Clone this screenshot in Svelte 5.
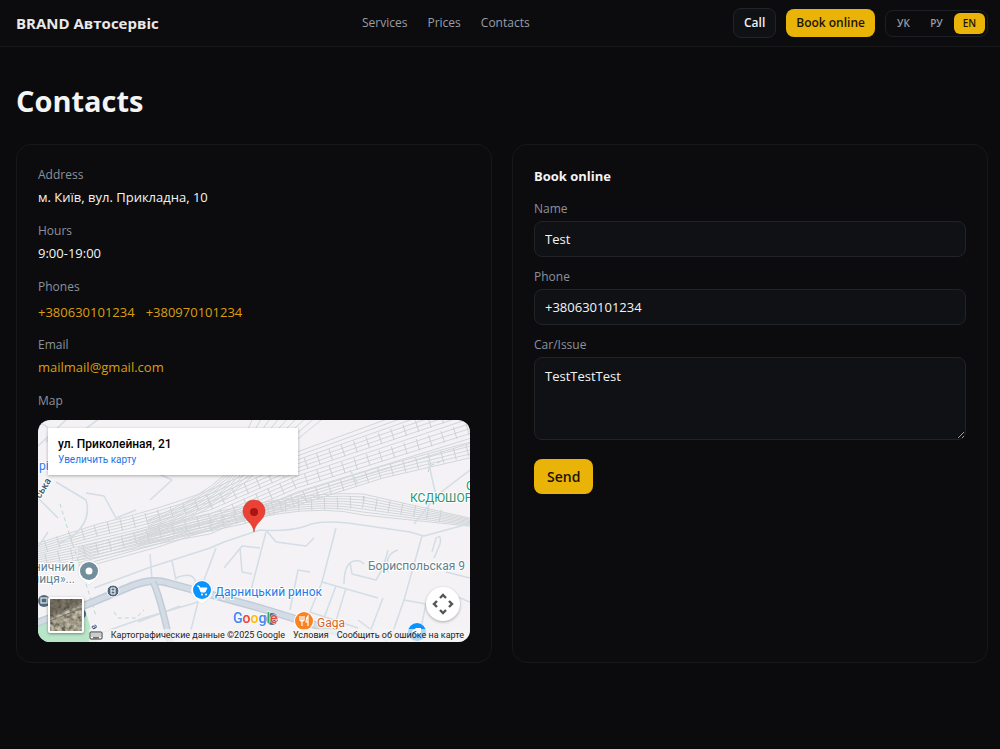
<script>
	const navLinks = ['Services', 'Prices', 'Contacts'];
	const languages = ['УК', 'РУ', 'EN'];
	const phones = ['+380630101234', '+380970101234'];

	let language = $state('EN');
	let name = $state('Test');
	let phone = $state('+380630101234');
	let issue = $state('TestTestTest');

	// rail yard: every track starts in the left bundle and fans out to the right
	const tracks = [];
	for (let i = 0; i < 12; i++) {
		tracks.push(`M-5 ${125 + i * 2} L60 ${104 + i * 3} Q120 ${90 + i * 3} 172 ${70 + i * 4} L259 ${32 + i * 4} L440 ${-34 + i * 5}`);
	}
	for (let i = 0; i < 5; i++) {
		tracks.push(`M100 ${118 + i * 2} L205 ${92 + i * 3} L269 ${70 + i * 3} L345 ${46 + i * 3} L440 ${20 + i * 4}`);
	}
	for (let i = 0; i < 8; i++) {
		tracks.push(`M40 ${128 + i * 3} L120 ${106 + i * 3} Q190 ${88 + i * 2} 239 ${80 + i * 2} T325 ${74 + i * 3} L440 ${100 + i}`);
	}
	for (let i = 0; i < 9; i++) {
		tracks.push(`M110 ${100 + i * 2} Q160 ${80 + i * 2} 190 ${52 + i * 3} L${216 + i * 9} -4`);
	}

	// sleepers are drawn as wide strokes with sparse dashes
	const sleepers = [
		'M-5 130 L60 110 Q120 98 172 80',
		'M-5 142 L60 128 Q120 112 172 100',
		'M172 84 L259 46 L440 -14',
		'M172 100 L259 62 L440 6',
		'M205 98 L269 76 L345 52 L440 28',
		'M172 106 L239 86 L325 82 L405 96'
	];

	const streets = [
		'M0 26 L28 0', 'M14 34 L62 -2', 'M0 78 L20 98', 'M18 62 L48 80 Q54 100 35 116 L20 124', 'M48 73 L66 76 L78 98 L98 90',
		'M112 50 L134 60 L112 80', 'M0 2 Q20 10 8 22', 'M-2 130 L10 112',
		'M172 128 L186 122 L222 110 Q250 112 268 106 Q280 100 310 103 L372 112 L386 116 L430 104',
		'M228 110 L238 122 L268 126 L276 118', 'M228 112 L212 174', 'M178 128 L160 176', 'M186 148 L204 126 L222 128 M202 128 L204 152 L214 154',
		'M298 108 L284 162 L340 178', 'M272 152 L260 150 L252 190', 'M284 162 L272 192 L320 208', 'M298 166 L286 198', 'M308 168 L297 204',
		'M345 178 L332 212', 'M306 164 Q306 138 322 141 L326 144 M312 142 L314 154 L338 160 Q346 148 350 130', 'M360 130 Q346 134 350 152',
		'M384 116 L366 180 L388 184 L380 222', 'M366 180 L352 220', 'M394 132 L398 118 Q404 114 402 124 L396 138', 'M408 152 L432 158',
		'M312 50 L320 64', 'M390 40 L398 76 L376 104', 'M398 76 L432 50',
		'M56 168 L110 148 L172 128', 'M134 141 L138 160', 'M112 134 L114 160', 'M138 158 Q158 150 158 166',
		'M100 202 L142 186', 'M60 214 L106 198 L160 182 L152 214', 'M412 174 L432 182', 'M320 200 L350 222'
	];

	const mainRoad = 'M-4 204 L50 184 L96 165 Q115 158 130 163 L222 188 L300 212';

	const crosshairArrows = [0, 90, 180, 270];

	function submitForm(event) {
		event.preventDefault();
	}
</script>

<header class="header">
	<a class="brand" href="#home">BRAND Автосервіс</a>
	<nav class="nav">
		{#each navLinks as link}
			<a href="#{link.toLowerCase()}">{link}</a>
		{/each}
	</nav>
	<div class="actions">
		<button class="btn btn-ghost">Call</button>
		<button class="btn btn-primary">Book online</button>
		<div class="languages">
			{#each languages as item}
				<button class="lang" class:active={language === item} onclick={() => (language = item)}>{item}</button>
			{/each}
		</div>
	</div>
</header>

<main class="page">
	<h1>Contacts</h1>

	<div class="grid">
		<section class="card info">
			<div>
				<div class="caption">Address</div>
				<div class="value">м. Київ, вул. Прикладна, 10</div>
			</div>
			<div>
				<div class="caption">Hours</div>
				<div class="value">9:00-19:00</div>
			</div>
			<div>
				<div class="caption">Phones</div>
				<div class="phones">
					{#each phones as item}
						<a href="tel:{item}">{item}</a>
					{/each}
				</div>
			</div>
			<div>
				<div class="caption">Email</div>
				<div class="value"><a href="mailto:mailmail@gmail.com">mailmail@gmail.com</a></div>
			</div>
			<div>
				<div class="caption">Map</div>
				<div class="map">
					<svg class="map-canvas" viewBox="0 0 432 222" preserveAspectRatio="xMidYMid slice" aria-hidden="true">
						<rect width="432" height="222" fill="#f4f2f5" />
						<path d="M0 204 L20 196 L46 186 L54 212 L60 222 L0 222 Z" fill="#b9e6c9" />
						<g fill="none" stroke="#d2d6d9">
							{#each tracks as d}
								<path {d} />
							{/each}
						</g>
						<g fill="none" stroke="#cdd2d5" stroke-width="12" stroke-dasharray="1 12">
							{#each sleepers as d}
								<path {d} />
							{/each}
						</g>
						<g fill="none" stroke="#d3dde5" stroke-width="1.5" stroke-linejoin="round">
							{#each streets as d}
								<path {d} />
							{/each}
						</g>
						<g fill="none" stroke="#b8dcc9" stroke-dasharray="4 3">
							<path d="M22 84 L30 110 L40 140 L50 170 L58 196" />
							<path d="M76 192 L80 198 L98 198 L106 190" />
							<path d="M390 52 L392 46 L406 40" />
						</g>
						<g fill="none" stroke-linejoin="round">
							<path d={mainRoad} stroke="#c0ccd8" stroke-width="8" />
							<path d={mainRoad} stroke="#d3dce5" stroke-width="5" />
							<path d="M115 162 Q122 176 132 222" stroke="#c0ccd8" stroke-width="7" />
							<path d="M115 162 Q122 176 132 222" stroke="#d3dce5" stroke-width="4" />
						</g>

						<g class="labels">
							<text class="poi-blue" x="1" y="50" font-size="12">рі</text>
							<text class="dark" font-size="10" font-weight="500" transform="translate(2 79) rotate(-58)">ська</text>
							<text class="poi-gray" x="37" y="151" font-size="12" text-anchor="end">ничний</text>
							<text class="poi-gray" x="37" y="163" font-size="12" text-anchor="end">ниця»...</text>
							<text class="poi-green" x="372" y="82" font-size="12">КСДЮШОР</text>
							<text class="poi-green" x="428" y="70" font-size="12">С</text>
							<text class="poi-gray" x="330" y="150" font-size="12">Бориспольская 9</text>
							<text class="poi-blue" x="177" y="176" font-size="12">Дарницький ринок</text>
							<text class="poi-orange" x="279" y="207" font-size="12">Gaga</text>
							<text class="dark" font-size="9" font-weight="500" transform="translate(53 206) rotate(60)">а</text>
						</g>

						<!-- transit stops -->
						<circle cx="75" cy="171" r="6" fill="#50687d" stroke="#fff" />
						<path d="M73 168 h4 v6 h-4 z M73 171 h4" fill="none" stroke="#fff" />
						<circle cx="6" cy="181" r="6" fill="#50687d" />
						<rect x="3" y="178" width="6" height="5" fill="none" stroke="#fff" />
						<circle cx="43" cy="194" r="5" fill="#50687d" />

						<!-- place pins -->
						<path d="M51 165 L43 159 A11 11 0 1 1 59 159 Z" fill="#fff" stroke="#d5d8db" stroke-width="0.5" />
						<circle cx="51" cy="151" r="9" fill="#728d9b" />
						<circle cx="51" cy="151" r="3.5" fill="#fff" />
						<path d="M164 184 L156 178 A11 11 0 1 1 172 178 Z" fill="#fff" stroke="#d5d8db" stroke-width="0.5" />
						<circle cx="164" cy="170" r="9" fill="#0b93ff" />
						<path d="M159 166 h2 l1 2 h7 l-2 4 h-4 l-2 -5 M162 168 l2 4" fill="#fff" stroke="#fff" />
						<circle cx="164" cy="174.5" r="1" fill="#fff" />
						<circle cx="168" cy="174.5" r="1" fill="#fff" />
						<circle cx="266" cy="201" r="10" fill="#fff" />
						<circle cx="266" cy="201" r="9" fill="#f98322" />
						<path d="M262 196 v4 q0 1 2 1 v5 M264 196 v5 M266 196 v4 q0 1 -2 1 M270 206 v-10 q-2 2 -2 6 h2" fill="none" stroke="#fff" stroke-width="1.2" />
						<circle cx="379" cy="212" r="9" fill="#0b93ff" />
						<path d="M374 211 l4 -3 h5 v6 h-8 z" fill="#fff" />

						<!-- main marker -->
						<path d="M216 112 C215 102 205 100 205 91 a11 11 0 0 1 22 0 C227 100 217 102 216 112 Z" fill="#ea4335" stroke="#d33426" stroke-width="0.6" />
						<circle cx="216" cy="92" r="4" fill="#a81411" />

						<circle cx="234" cy="199" r="6" fill="#50687d" />
						<text class="logo" x="195" y="203"><tspan fill="#4285f4">G</tspan><tspan fill="#ea4335">o</tspan><tspan fill="#fbbc04">o</tspan><tspan fill="#4285f4">g</tspan><tspan fill="#34a853">l</tspan><tspan fill="#ea4335">e</tspan></text>
					</svg>

					<div class="place">
						<strong>ул. Приколейная, 21</strong>
						<a href="#map">Увеличить карту</a>
					</div>

					<button class="satellite" aria-label="Satellite">
						<svg viewBox="0 0 32 32" aria-hidden="true">
							<filter id="grain">
								<feTurbulence type="fractalNoise" baseFrequency="0.25" numOctaves="3" seed="4" />
								<feColorMatrix values="0.8 0 0 0 -0.06  0.75 0 0 0 -0.06  0.65 0 0 0 -0.08  0 0 0 0 1" />
							</filter>
							<rect width="32" height="32" filter="url(#grain)" />
							<path d="M0 18 L32 5 M0 22 L32 9" stroke="#77736a" />
							<path d="M0 0 H32 V4 L0 17 Z" fill="#4e4a3e" opacity="0.6" />
							<path d="M6 20 l4 -2 2 4 -4 1z M20 22 l6 -2 1 4 -6 2z" fill="#a5977f" />
						</svg>
					</button>

					<button class="camera" aria-label="Map camera controls">
						<svg viewBox="0 0 24 24" aria-hidden="true">
							{#each crosshairArrows as angle}
								<path d="M9 6 L12 3 L15 6" transform="rotate({angle} 12 12)" fill="none" stroke="#555" stroke-width="2.4" />
							{/each}
						</svg>
					</button>

					<div class="attribution">
						<button class="keyboard" aria-label="Keyboard shortcuts">
							<svg viewBox="0 0 14 9" aria-hidden="true">
								<rect x="1" y="1" width="12" height="7" rx="1" fill="#fff" stroke="#333" />
								<path d="M2.5 3 h9 M2.5 5 h9" stroke="#333" stroke-dasharray="1 1" />
								<path d="M4 6.8 h6" stroke="#333" />
							</svg>
						</button>
						<span>Картографические данные ©2025 Google</span>
						<a href="#terms">Условия</a>
						<a href="#report">Сообщить об ошибке на карте</a>
					</div>
				</div>
			</div>
		</section>

		<section class="card">
			<h2>Book online</h2>
			<form onsubmit={submitForm}>
				<div class="field">
					<label for="name">Name</label>
					<input id="name" type="text" bind:value={name} />
				</div>
				<div class="field">
					<label for="phone">Phone</label>
					<input id="phone" type="tel" bind:value={phone} />
				</div>
				<div class="field">
					<label for="issue">Car/Issue</label>
					<textarea id="issue" bind:value={issue}></textarea>
				</div>
				<button class="btn btn-primary btn-send" type="submit">Send</button>
			</form>
		</section>
	</div>
</main>

<style>
	:global(body) {
		margin: 0;
		background: #0b0b0d;
		color: #f4f4f5;
		font-family: 'Segoe UI', 'Open Sans', 'Noto Sans', sans-serif;
		font-size: 13px;
		line-height: 22px;
	}

	a {
		color: inherit;
		text-decoration: none;
	}

	button,
	input,
	textarea {
		font: inherit;
		box-sizing: border-box;
	}

	button {
		cursor: pointer;
	}

	.header {
		display: flex;
		align-items: center;
		justify-content: space-between;
		height: 46px;
		padding: 0 12px 0 16px;
		border-bottom: 1px solid #18191b;
		background: #0c0c0e;
	}

	.brand {
		font-size: 15px;
		font-weight: 700;
		color: #e9e9eb;
	}

	.nav {
		display: flex;
		gap: 20px;
		font-size: 12px;
		color: #9a9ca6;
	}

	.actions {
		display: flex;
		align-items: center;
		gap: 10px;
	}

	.btn {
		height: 28px;
		padding: 0 10px;
		border: 0;
		border-radius: 8px;
		font-size: 12px;
		font-weight: 600;
		line-height: 20px;
	}

	.btn-ghost {
		height: 30px;
		border: 1px solid #232427;
		background: #101114;
		color: #f0f0f2;
	}

	.btn-primary {
		background: #eab308;
		color: #1a1405;
	}

	.languages {
		display: flex;
		gap: 2px;
		padding: 2px;
		border: 1px solid #1e1f22;
		border-radius: 8px;
	}

	.lang {
		height: 21px;
		min-width: 31px;
		padding: 0 8px;
		border: 0;
		border-radius: 6px;
		background: none;
		color: #9a9ca6;
		font-size: 10px;
		font-weight: 600;
		line-height: 20px;
	}

	.lang.active {
		background: #eab308;
		color: #1a1405;
	}

	.page {
		padding: 32px 12px 32px 16px;
	}

	h1 {
		margin: 0 0 22px;
		font-size: 29px;
		font-weight: 700;
		line-height: 43px;
	}

	.grid {
		display: grid;
		grid-template-columns: repeat(2, minmax(0, 1fr));
		gap: 20px;
	}

	.card {
		padding: 20px 21px;
		border: 1px solid #17181a;
		border-radius: 15px;
		background: #0c0c0e;
	}

	.info {
		display: flex;
		flex-direction: column;
		gap: 13px;
	}

	.info a {
		color: #d99f0b;
	}

	.caption,
	label {
		display: block;
		font-size: 12px;
		line-height: 20px;
		color: #8b919c;
	}

	.value {
		margin-top: 1px;
	}

	.phones {
		display: flex;
		gap: 11px;
		margin-top: 5px;
		line-height: 20px;
	}

	.map {
		position: relative;
		height: 222px;
		margin-top: 9px;
		overflow: hidden;
		border-radius: 12px;
		color: #222;
		font-family: Roboto, Arial, sans-serif;
	}

	.map-canvas {
		display: block;
		width: 100%;
		height: 100%;
	}

	.labels text {
		stroke: #fff;
		stroke-width: 2px;
		paint-order: stroke;
	}

	.poi-blue {
		fill: #1f7bea;
	}

	.poi-gray {
		fill: #62808b;
	}

	.poi-green {
		fill: #2e9470;
	}

	.poi-orange {
		fill: #d9631e;
	}

	.dark {
		fill: #43546b;
	}

	.logo {
		font-size: 14px;
		font-weight: 500;
		stroke: #fff;
		stroke-width: 1px;
		paint-order: stroke;
	}

	.place {
		position: absolute;
		top: 8px;
		left: 10px;
		box-sizing: border-box;
		width: 250px;
		height: 47px;
		padding: 7px 10px;
		background: #fff;
		box-shadow: 0 1px 3px rgba(0, 0, 0, 0.3);
	}

	.place strong {
		display: block;
		font-size: 12px;
		font-weight: 500;
		line-height: 18px;
		color: #000;
	}

	.info .place a {
		display: block;
		font-size: 10px;
		line-height: 14px;
		color: #1a73e8;
	}

	.satellite {
		position: absolute;
		bottom: 9px;
		left: 10px;
		width: 36px;
		height: 36px;
		padding: 0;
		overflow: hidden;
		border: 2px solid #fff;
		border-radius: 2px;
		background: #5c574a;
		box-shadow: 0 1px 3px rgba(0, 0, 0, 0.4);
	}

	.satellite svg {
		display: block;
	}

	.camera {
		position: absolute;
		right: 10px;
		bottom: 21px;
		width: 34px;
		height: 34px;
		padding: 5px;
		border: 0;
		border-radius: 50%;
		background: #fff;
		box-shadow: 0 1px 3px rgba(0, 0, 0, 0.3);
	}

	.camera svg {
		display: block;
	}

	.attribution {
		position: absolute;
		right: 0;
		bottom: 0;
		display: flex;
		align-items: center;
		gap: 8px;
		padding: 0 6px 0 0;
		background: rgba(245, 245, 245, 0.7);
		font-size: 9px;
		line-height: 13px;
		white-space: nowrap;
	}

	.info .attribution a {
		color: #222;
	}

	.keyboard {
		width: 14px;
		height: 12px;
		padding: 0;
		border: 0;
		background: none;
	}

	.keyboard svg {
		display: block;
		width: 14px;
	}

	h2 {
		margin: 0 0 12px;
		font-size: 13px;
		font-weight: 700;
		line-height: 22px;
	}

	.field {
		margin-bottom: 10px;
	}

	label {
		margin-bottom: 2px;
	}

	input,
	textarea {
		display: block;
		width: 100%;
		height: 36px;
		padding: 0 10px;
		border: 1px solid #222326;
		border-radius: 8px;
		background: #101114;
		color: #f4f4f5;
	}

	textarea {
		height: 83px;
		padding: 7px 10px;
		resize: vertical;
	}

	.btn-send {
		height: 35px;
		margin-top: 9px;
		padding: 0 13px;
		font-size: 14px;
	}
</style>
